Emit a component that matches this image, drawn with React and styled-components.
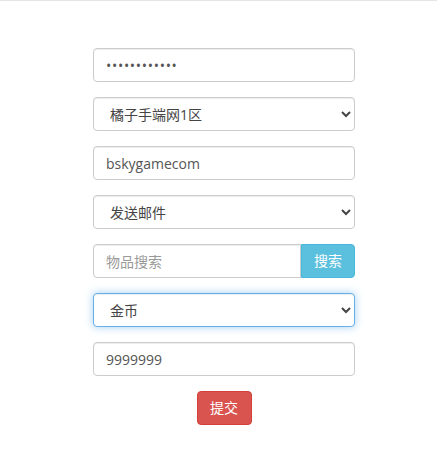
import React from "react";
import styled, { createGlobalStyle, css } from "styled-components";

const GlobalStyle = createGlobalStyle`
  html, body {
    margin: 0;
    padding: 0;
    background: #fff;
  }
  body {
    font-family: "Open Sans", "Noto Sans CJK SC", sans-serif;
    font-size: 14px;
    color: #555;
  }
  * {
    box-sizing: border-box;
  }
`;

const Page = styled.div`
  border-top: 1px solid #e5e5e5;
  min-height: 463px;
  display: flex;
  justify-content: center;
  padding: 47px 0 0 11px;
`;

const Form = styled.form`
  width: 262px;
  display: flex;
  flex-direction: column;
  gap: 15px;
`;

const fieldBase = css`
  display: block;
  width: 100%;
  height: 34px;
  padding: 6px 12px;
  font-family: inherit;
  font-size: 14px;
  line-height: 1.42857;
  color: #555;
  background: #fff;
  border: 1px solid #ccc;
  border-radius: 4px;
  box-shadow: inset 0 1px 1px rgba(0, 0, 0, 0.075);
  outline: none;

  &::placeholder {
    color: #999;
  }

  ${(p) =>
    p.$focused &&
    css`
      border-color: #66afe9;
      box-shadow: inset 0 1px 1px rgba(0, 0, 0, 0.075),
        0 0 8px rgba(102, 175, 233, 0.6);
    `}
`;

const Input = styled.input`
  ${fieldBase}
  &[type="password"] {
    letter-spacing: 0.7px;
  }
  ${(p) =>
    p.$grouped &&
    css`
      border-top-right-radius: 0;
      border-bottom-right-radius: 0;
    `}
`;

const Select = styled.select`
  ${fieldBase}
  padding: 6px 8px 6px 12px;
  color: #444;
`;

const InputGroup = styled.div`
  display: flex;
  width: 100%;
`;

const Button = styled.button`
  height: 34px;
  padding: 6px 12px;
  font-family: inherit;
  font-size: 14px;
  line-height: 1.42857;
  color: #fff;
  border: 1px solid ${(p) => p.$border};
  background: ${(p) => p.$bg};
  border-radius: 4px;
  white-space: nowrap;
  cursor: pointer;
`;

const GroupButton = styled(Button)`
  flex: none;
  width: 54px;
  border-top-left-radius: 0;
  border-bottom-left-radius: 0;
`;

const Actions = styled.div`
  display: flex;
  justify-content: center;
`;

const SubmitButton = styled(Button)`
  width: 55px;
  padding: 6px 0;
`;

export default function App() {
  return (
    <>
      <GlobalStyle />
      <Page>
        <Form onSubmit={(e) => e.preventDefault()}>
          <Input type="password" defaultValue="123456789012" />
          <Select defaultValue="1">
            <option value="1">橘子手端网1区</option>
          </Select>
          <Input type="text" defaultValue="bskygamecom" />
          <Select defaultValue="mail">
            <option value="mail">发送邮件</option>
          </Select>
          <InputGroup>
            <Input type="text" placeholder="物品搜索" $grouped />
            <GroupButton type="button" $bg="#5bc0de" $border="#46b8da">
              搜索
            </GroupButton>
          </InputGroup>
          <Select defaultValue="gold" $focused>
            <option value="gold">金币</option>
          </Select>
          <Input type="text" defaultValue="9999999" />
          <Actions>
            <SubmitButton type="submit" $bg="#d9534f" $border="#d43f3a">
              提交
            </SubmitButton>
          </Actions>
        </Form>
      </Page>
    </>
  );
}
